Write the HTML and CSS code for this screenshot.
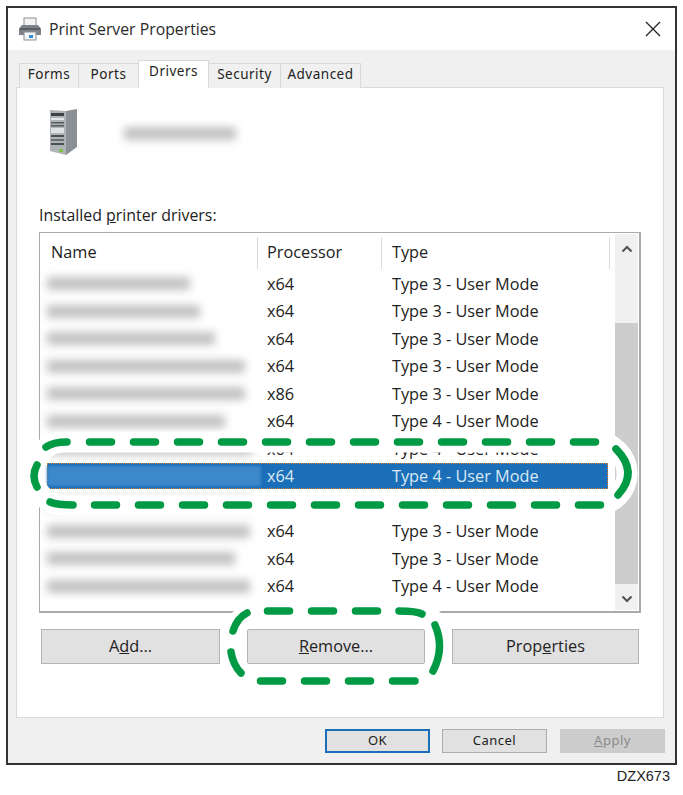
FILE: index.html
```html
<!DOCTYPE html>
<html lang="en">
<head>
<meta charset="utf-8">
<title>Print Server Properties</title>
<link rel="stylesheet" href="styles.css">
</head>
<body>
<div class="page">
  <div class="dialog">
    <div class="titlebar">
      <svg class="printer" width="24" height="24" viewBox="0 0 24 24">
        <rect x="6" y="1" width="12" height="8" fill="#f4f4f4" stroke="#8a8f96"/>
        <path d="M1 11.5 4 8h16l3 3.500V18H1z" fill="#7d8288"/>
        <rect x="2" y="11" width="20" height="2" fill="#5a5f66"/>
        <rect x="6" y="15" width="12" height="8" fill="#f2f6f8" stroke="#8a8f96"/>
        <rect x="11" y="18" width="4" height="3" fill="#2f8fd0"/>
      </svg>
      <span class="title">Print Server Properties</span>
      <svg class="close" width="16" height="16" viewBox="0 0 16 16"><path d="M1 1 15 15M15 1 1 15" stroke="#222" stroke-width="1.300" fill="none"/></svg>
    </div>
    <div class="body">
      <div class="tabs">
        <div class="tab t1">Forms</div>
        <div class="tab t2">Ports</div>
        <div class="tab t3 active">Drivers</div>
        <div class="tab t4">Security</div>
        <div class="tab t5">Advanced</div>
      </div>
      <div class="panel">
        <div class="server">
          <svg width="30" height="48" viewBox="0 0 30 48">
            <path d="M2 2 18 3V47L2 43z" fill="#aeb3b6"/>
            <path d="M18 3 29 1V39L18 47z" fill="#8b9094"/>
            <rect x="3" y="5" width="13" height="3" fill="#3d4246"/>
            <rect x="3" y="10" width="13" height="2" fill="#e6e8ea"/>
            <rect x="3" y="14" width="13" height="1.500" fill="#555a5e"/>
            <rect x="3" y="17" width="13" height="1.500" fill="#555a5e"/>
            <rect x="3" y="20" width="13" height="5" fill="#dfe2e4"/>
            <rect x="3" y="27" width="13" height="2" fill="#4b5054"/>
            <rect x="3" y="31" width="13" height="2" fill="#6a6f73"/>
            <rect x="3" y="35" width="13" height="2" fill="#4b5054"/>
            <rect x="11" y="41" width="4" height="3" fill="#7fbf4d"/>
          </svg>
          <div class="blur server-name"></div>
        </div>
        <div class="label">Installed <u>p</u>rinter drivers:</div>
        <div class="listbox">
          <div class="list">
            <div class="head">
              <div class="hcell c-name">Name</div>
              <div class="hcell c-proc">Processor</div>
              <div class="hcell c-type">Type</div>
            </div>
            <div class="row"><div class="name"><div class="blur" style="width:143px"></div></div><div class="proc">x64</div><div>Type 3 - User Mode</div></div>
            <div class="row"><div class="name"><div class="blur" style="width:153px"></div></div><div class="proc">x64</div><div>Type 3 - User Mode</div></div>
            <div class="row"><div class="name"><div class="blur" style="width:168px"></div></div><div class="proc">x64</div><div>Type 3 - User Mode</div></div>
            <div class="row"><div class="name"><div class="blur" style="width:198px"></div></div><div class="proc">x64</div><div>Type 3 - User Mode</div></div>
            <div class="row"><div class="name"><div class="blur" style="width:198px"></div></div><div class="proc">x86</div><div>Type 3 - User Mode</div></div>
            <div class="row"><div class="name"><div class="blur" style="width:178px"></div></div><div class="proc">x64</div><div>Type 4 - User Mode</div></div>
            <div class="row"><div class="name"><div class="blur" style="width:205px"></div></div><div class="proc">x64</div><div>Type 4 - User Mode</div></div>
            <div class="row selected"><div class="name"><div class="blur light"></div></div><div class="proc">x64</div><div>Type 4 - User Mode</div></div>
            <div class="row"><div class="name"><div class="blur" style="width:205px"></div></div><div class="proc">x64</div><div>Type 3 - User Mode</div></div>
            <div class="row"><div class="name"><div class="blur" style="width:203px"></div></div><div class="proc">x64</div><div>Type 3 - User Mode</div></div>
            <div class="row"><div class="name"><div class="blur" style="width:188px"></div></div><div class="proc">x64</div><div>Type 3 - User Mode</div></div>
            <div class="row"><div class="name"><div class="blur" style="width:203px"></div></div><div class="proc">x64</div><div>Type 4 - User Mode</div></div>
          </div>
          <div class="scrollbar">
            <svg class="arrow" width="12" height="8" viewBox="0 0 12 8"><path d="M1.500 6.500 6 2l4.500 4.500" fill="none" stroke="#555" stroke-width="2.200"/></svg>
            <div class="track"><div class="thumb"></div></div>
            <svg class="arrow" width="12" height="8" viewBox="0 0 12 8"><path d="M1.500 1.500 6 6l4.500-4.500" fill="none" stroke="#555" stroke-width="2.200"/></svg>
          </div>
        </div>
        <div class="actions">
          <div class="btn add">A<u>d</u>d...</div>
          <div class="btn remove"><u>R</u>emove...</div>
          <div class="btn props">Prop<u>e</u>rties</div>
        </div>
      </div>
      <div class="footer">
        <div class="fbtn ok">OK</div>
        <div class="fbtn">Cancel</div>
        <div class="fbtn apply"><u>A</u>pply</div>
      </div>
    </div>
  </div>
  <div class="code">DZX673</div>
  <svg class="callouts" width="683" height="795" viewBox="0 0 683 795">
    <rect class="halo" x="33" y="442" width="594" height="63" rx="31"/>
    <rect class="halo near" x="232" y="611" width="209" height="70" rx="26"/>
    <path class="mark" d="M46 447Q53 442 67 442"/>
    <path class="mark dash" d="M89.500 442H596"/>
    <path class="mark" d="M37 465Q31 476 37 487"/>
    <path class="mark" d="M616 449Q639 472 618 495"/>
    <path class="mark" d="M50 502Q57 505 73 505"/>
    <path class="mark dash" d="M94.500 505H601"/>
    <path class="mark" d="M247 613Q237 618 233 631"/>
    <path class="mark dash" d="M267.500 611H378"/>
    <path class="mark" d="M399 611Q417 611 422 614"/>
    <path class="mark" d="M435 625Q445 648 433 671"/>
    <path class="mark" d="M231 652Q233 665 241 673"/>
    <path class="mark dash" d="M260.500 681H372"/>
    <path class="mark" d="M392.500 681H415"/>
  </svg>
</div>
</body>
</html>
```
FILE: styles.css
```css
* { box-sizing: border-box; }
html, body { margin: 0; padding: 0; background: #fff; }
body { font-family: "Open Sans", "Noto Sans", sans-serif; color: #222; }
.page { position: relative; width: 683px; height: 795px; overflow: hidden; padding: 6px 0 0 6px; }
.dialog { width: 671px; height: 759px; border: 2px solid #333; display: flex; flex-direction: column; background: #f0f0f0; }
.titlebar { height: 42px; background: #fff; display: flex; align-items: center; padding: 0 14px 0 10px; flex: none; }
.title { font-size: 15.800px; margin-left: 7px; flex: 1; line-height: 22px; color: #2a2a2a; }
.printer { flex: none; }
.close { flex: none; }
.body { flex: 1; display: flex; flex-direction: column; padding: 11px 12px 0 8px; }
.tabs { display: flex; height: 27px; align-items: flex-end; padding-left: 3px; flex: none; margin-bottom: -1px; position: relative; z-index: 1; }
.tab { height: 25px; background: #f0f0f0; border: 1px solid #d9d9d9; border-bottom: 0; font-size: 13.500px; letter-spacing: .5px; display: flex; align-items: center; justify-content: center; margin-right: -1px; padding-bottom: 4px; color: #222; font-family: "Noto Sans", sans-serif; }
.tab.active { height: 28px; background: #fff; padding-bottom: 6px; z-index: 2; border-bottom: 1px solid #fff; }
.t1 { width: 60px; } .t2 { width: 61px; } .t3 { width: 71px; } .t4 { width: 73px; } .t5 { width: 81px; }
.panel { width: 648px; height: 631px; background: #fff; border: 1px solid #dadada; padding: 0 22px; flex: none; }
.server { height: 99px; padding: 20px 0 0 9px; display: flex; align-items: flex-start; }
.server-name { width: 112px; height: 15px; margin: 19px 0 0 46px; }
.blur { background: #c2c2c2; filter: blur(4.500px); height: 13px; }
.label { font-size: 15.900px; line-height: 20px; height: 45px; padding-top: 18px; color: #222; }
.listbox { width: 602px; height: 381px; border: 1px solid #a9a9a9; border-bottom-width: 2px; border-right-width: 2px; display: flex; background: #fff; }
.list { flex: 1; min-width: 0; }
.head { height: 37px; display: flex; padding-top: 4px; font-size: 16.300px; }
.hcell { height: 32px; line-height: 30px; border-right: 1px solid #dcdcdc; padding-left: 11px; }
.c-name { width: 218px; }
.c-proc { width: 124px; padding-left: 9px; }
.c-type { width: 228px; padding-left: 10px; }
.row { height: 27.500px; display: flex; align-items: center; font-size: 16.300px; padding-left: 7px; }
.name { width: 220px; flex: none; }
.proc { width: 125px; flex: none; }
.selected { background: #1a6fb8; color: #dde9f5; outline: 1px dotted #d9822b; outline-offset: -1px; height: 26px; margin: 0 7px 1.500px 7px; padding-left: 0; }
.selected .name { width: 220px; height: 20px; }
.selected .blur.light { background: #3c88c9; width: 214px; height: 20px; filter: blur(1.500px); }
.scrollbar { width: 23px; margin: 1px 1px 1px 0; background: #f0f0f0; display: flex; flex-direction: column; align-items: center; flex: none; }
.arrow { flex: none; margin: 11px 0; }
.track { flex: 1; width: 100%; padding-top: 59px; display: flex; }
.thumb { width: 100%; height: 261px; background: #cdcdcd; }
.actions { display: flex; margin: 16px 0 0 2px; }
.btn { height: 35px; background: #e1e1e1; border: 1px solid #b4b4b4; font-size: 16.300px; padding-bottom: 2px; display: flex; align-items: center; justify-content: center; }
.add { width: 179px; margin-right: 27px; }
.remove { width: 178px; margin-right: 27px; border-radius: 2px; }
.props { width: 187px; }
.footer { display: flex; margin: 11px 0 0 309px; }
.fbtn { flex: none; width: 105px; height: 24px; margin-right: 12px; background: #e1e1e1; border: 1px solid #adadad; font-size: 13px; letter-spacing: .5px; padding-bottom: 2px; display: flex; align-items: center; justify-content: center; font-family: "Noto Sans", sans-serif; }
.ok { border: 2px solid #1a6fb8; }
.apply { margin-left: 1px; margin-right: 0; background: #cccccc; border-color: #cccccc; color: #8a8a8a; }
.code { font-family: "Liberation Sans", Arial, sans-serif; font-size: 14.500px; line-height: 16px; color: #222; text-align: right; padding: 3px 13px 0 0; }
.callouts { position: absolute; left: 0; top: 0; }
.halo { fill: none; stroke: #fff; stroke-width: 21; }
.halo.near { stroke-width: 19; }
.mark { fill: none; stroke: #009944; stroke-width: 7.500; stroke-linecap: round; }
.dash { stroke-dasharray: 22 22; }
```
